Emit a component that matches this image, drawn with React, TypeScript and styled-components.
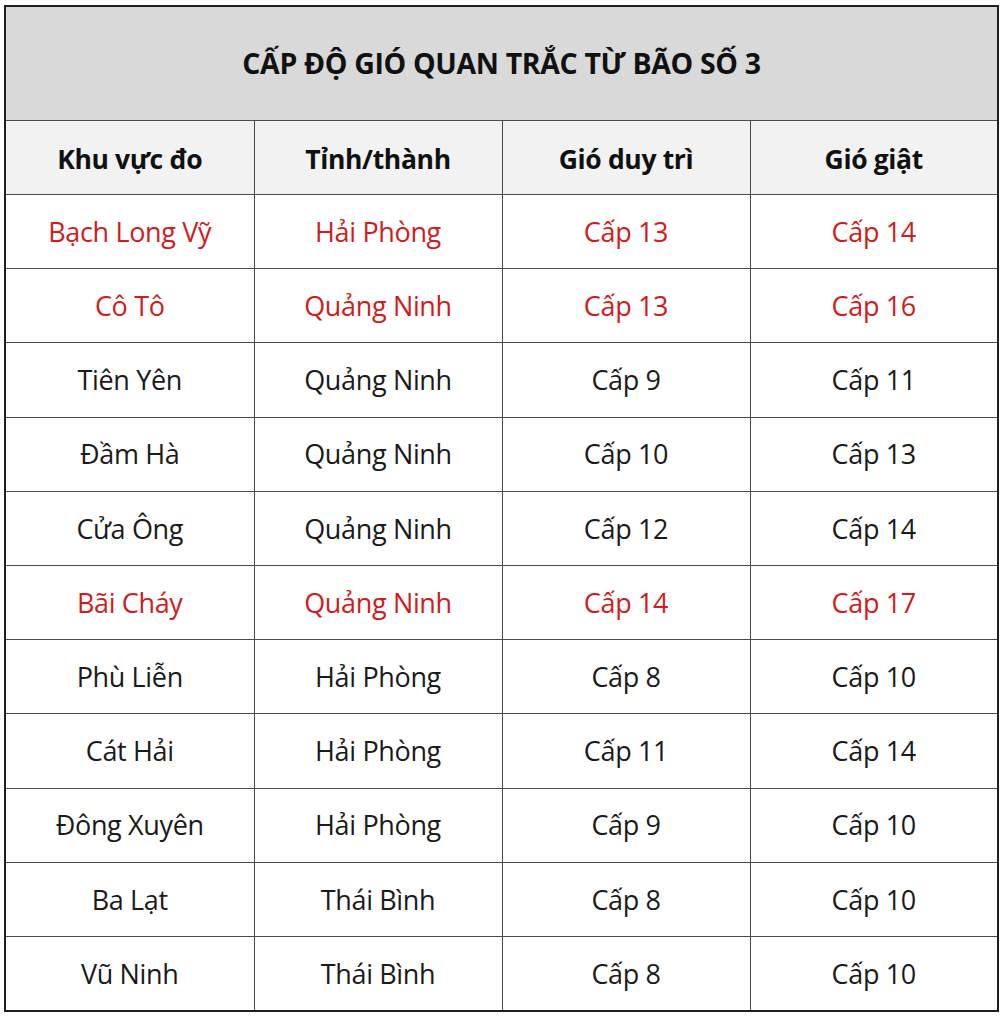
import React from "react";
import styled, { createGlobalStyle } from "styled-components";

interface Station {
  area: string;
  province: string;
  sustained: number;
  gust: number;
  highlight?: boolean;
}

const stations: Station[] = [
  { area: "Bạch Long Vỹ", province: "Hải Phòng", sustained: 13, gust: 14, highlight: true },
  { area: "Cô Tô", province: "Quảng Ninh", sustained: 13, gust: 16, highlight: true },
  { area: "Tiên Yên", province: "Quảng Ninh", sustained: 9, gust: 11 },
  { area: "Đầm Hà", province: "Quảng Ninh", sustained: 10, gust: 13 },
  { area: "Cửa Ông", province: "Quảng Ninh", sustained: 12, gust: 14 },
  { area: "Bãi Cháy", province: "Quảng Ninh", sustained: 14, gust: 17, highlight: true },
  { area: "Phù Liễn", province: "Hải Phòng", sustained: 8, gust: 10 },
  { area: "Cát Hải", province: "Hải Phòng", sustained: 11, gust: 14 },
  { area: "Đông Xuyên", province: "Hải Phòng", sustained: 9, gust: 10 },
  { area: "Ba Lạt", province: "Thái Bình", sustained: 8, gust: 10 },
  { area: "Vũ Ninh", province: "Thái Bình", sustained: 8, gust: 10 },
];

const GlobalStyle = createGlobalStyle`
  html, body {
    margin: 0;
    padding: 0;
    background: #ffffff;
  }
  body {
    font-family: "Open Sans", "Noto Sans", sans-serif;
  }
`;

const Page = styled.div`
  width: 1000px;
  height: 1016px;
  padding: 5px 0 0 4px;
  box-sizing: border-box;
  background: #fff;
`;

const Table = styled.table`
  width: 993px;
  border-collapse: collapse;
  table-layout: fixed;
  border: 2px solid #1e1e1e;
`;

const TitleCell = styled.th`
  height: 113px;
  background: #d9d9d9;
  border-bottom: 1px solid #4a4a4a;
  font-size: 28.5px;
  line-height: 1.2;
  font-weight: 700;
  color: #111;
  letter-spacing: -0.35px;
  text-align: center;
  vertical-align: middle;
  padding: 0;
`;

const HeadCell = styled.th`
  height: 74px;
  box-sizing: border-box;
  background: #f2f2f2;
  border: 1px solid #4a4a4a;
  font-size: 26.5px;
  line-height: 1.2;
  font-weight: 700;
  color: #111;
  letter-spacing: -0.35px;
  text-align: center;
  padding: 4px 0 0;
`;

const Row = styled.tr`
  height: 74.2px;
`;

const Cell = styled.td<{ $red?: boolean }>`
  border: 1px solid #4a4a4a;
  font-size: 27px;
  line-height: 1.2;
  font-weight: 400;
  color: ${(p) => (p.$red ? "#d01c1c" : "#1a1a1a")};
  letter-spacing: -0.35px;
  text-align: center;
  padding: 1px 0 0;
`;

const App: React.FC = () => {
  return (
    <Page>
      <GlobalStyle />
      <Table>
        <colgroup>
          <col style={{ width: 249 }} />
          <col style={{ width: 248 }} />
          <col style={{ width: 248 }} />
          <col style={{ width: 248 }} />
        </colgroup>
        <thead>
          <tr>
            <TitleCell colSpan={4}>CẤP ĐỘ GIÓ QUAN TRẮC TỪ BÃO SỐ 3</TitleCell>
          </tr>
          <tr>
            <HeadCell>Khu vực đo</HeadCell>
            <HeadCell>Tỉnh/thành</HeadCell>
            <HeadCell>Gió duy trì</HeadCell>
            <HeadCell>Gió giật</HeadCell>
          </tr>
        </thead>
        <tbody>
          {stations.map((s) => (
            <Row key={s.area}>
              <Cell $red={s.highlight}>{s.area}</Cell>
              <Cell $red={s.highlight}>{s.province}</Cell>
              <Cell $red={s.highlight}>Cấp {s.sustained}</Cell>
              <Cell $red={s.highlight}>Cấp {s.gust}</Cell>
            </Row>
          ))}
        </tbody>
      </Table>
    </Page>
  );
};

export default App;
